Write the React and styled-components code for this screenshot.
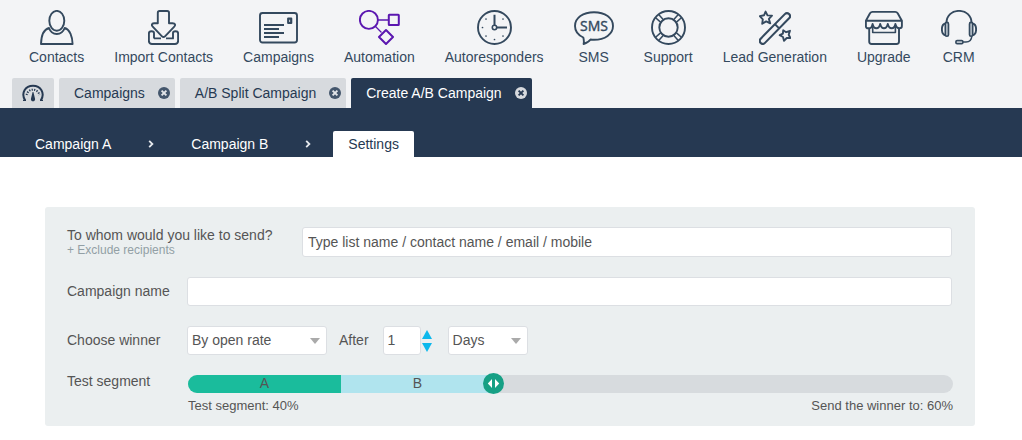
import React, { useState } from "react"
import styled, { createGlobalStyle } from "styled-components"

const GlobalStyle = createGlobalStyle`
  :root {
    --clr-header: #f3f4f6;
    --clr-tab: #d7dade;
    --clr-navy: #263952;
    --clr-slate: #34495e;
    --clr-purple: #5b17b0;
    --clr-panel: #ebeff0;
    --clr-border: #dcdfe3;
    --clr-green: #1abc9c;
    --clr-green-dark: #16a085;
    --clr-cyan: #b0e4ee;
    --clr-track: #d7dbde;
    --clr-blue: #0db8ec;
    --txt-form: #555;
    --txt-muted: #929fa5;
  }

  *,
  *::before,
  *::after {
    box-sizing: border-box;
  }

  body {
    margin: 0;
    background: #fff;
    color: var(--clr-slate);
    font: 14px/16px "Liberation Sans", Arial, sans-serif;
  }

  a {
    color: inherit;
    text-decoration: none;
  }

  input,
  select,
  button {
    font: inherit;
    color: inherit;
    margin: 0;
  }
`

const Header = styled.header`
  background: var(--clr-header);
  padding-top: 10px;
`

const MainNav = styled.nav`
  display: flex;
  gap: 30px;
  padding: 0 29px;
`

const NavItem = styled.a`
  display: flex;
  flex-direction: column;
  align-items: center;
  gap: 4px;
  white-space: nowrap;
`

const Icon = styled.svg`
  display: block;
  height: 35px;
  width: ${props => props.$w}px;
  fill: none;
  stroke: ${props => props.$color || "var(--clr-slate)"};
  stroke-width: 1.9;
  stroke-linejoin: round;
`

const IconText = styled.text`
  font-family: "Open Sans", sans-serif;
  font-size: 14px;
  fill: var(--clr-slate);
  stroke-width: 0.4;
`

const TabBar = styled.div`
  display: flex;
  gap: 5px;
  margin-top: 13px;
  padding: 0 12px;
`

const Tab = styled.div`
  display: flex;
  align-items: center;
  gap: 13px;
  height: 30px;
  padding: 0 5px 0 15px;
  border-radius: 2px 2px 0 0;
  white-space: nowrap;
  background: ${props => (props.$active ? "var(--clr-navy)" : "var(--clr-tab)")};
  color: ${props => (props.$active ? "#fff" : "var(--clr-navy)")};
`

const HomeTab = styled.a`
  display: flex;
  align-items: center;
  height: 30px;
  padding: 0 10px;
  border-radius: 2px 2px 0 0;
  background: var(--clr-tab);
`

const CloseButton = styled.button`
  display: block;
  width: 12px;
  height: 12px;
  padding: 0;
  border: 0;
  background: none;
  cursor: pointer;

  svg {
    display: block;
  }
`

const StepBar = styled.nav`
  display: flex;
  align-items: stretch;
  padding: 23px 20px 0;
  background: var(--clr-navy);
  color: #fff;
`

const Step = styled.a`
  padding: 5px 15px;
  border-radius: 2px 2px 0 0;
  ${props => props.$active && "background: #fff; color: var(--clr-navy);"}
`

const StepArrow = styled.span`
  display: flex;
  align-items: center;
  justify-content: center;
  width: 50px;
`

const Panel = styled.form`
  display: flex;
  flex-direction: column;
  gap: 20px;
  margin: 50px 47px 14px 45px;
  padding: 20px 23px 13px 22px;
  border-radius: 3px;
  background: var(--clr-panel);
  color: var(--txt-form);
`

const Row = styled.div`
  display: grid;
  grid-template-columns: ${props => (props.$wide ? "235px" : "120px")} 1fr;
  align-items: ${props => (props.$top ? "start" : "center")};
`

const Label = styled.label`
  display: block;
`

const FieldLabel = styled(Label)`
  padding-bottom: 2px;
`

const SegmentLabel = styled(Label)`
  line-height: 12px;
`

const Exclude = styled.a`
  display: block;
  font-size: 12px;
  line-height: 14px;
  color: var(--txt-muted);
`

const TextInput = styled.input`
  display: block;
  width: 100%;
  height: ${props => (props.$tall ? 30 : 29)}px;
  padding: 0 5px;
  border: 1px solid var(--clr-border);
  border-radius: 3px;
  background: #fff;

  &::placeholder {
    color: var(--txt-form);
    opacity: 1;
  }
`

const Inline = styled.div`
  display: flex;
  align-items: center;
`

const SelectBox = styled.div`
  position: relative;
  width: ${props => props.$w}px;

  select {
    display: block;
    appearance: none;
    width: 100%;
    height: 29px;
    padding: 0 24px 2px 4px;
    border: 1px solid var(--clr-border);
    border-radius: 3px;
    background: #fff;
  }

  svg {
    position: absolute;
    right: 7px;
    top: 12px;
    pointer-events: none;
  }
`

const AfterLabel = styled(FieldLabel)`
  margin: 0 14px 0 12px;
`

const NumberInput = styled(TextInput)`
  width: 38px;
  padding: 0 4px 2px;
`

const Spinner = styled.div`
  display: flex;
  flex-direction: column;
  gap: 4px;
  margin: 0 16px 0 1px;

  button {
    display: block;
    padding: 0;
    border: 0;
    background: none;
    cursor: pointer;
  }

  svg {
    display: block;
    fill: var(--clr-blue);
  }
`

const Slider = styled.div`
  position: relative;
  margin: 0 -1px 0 1px;
`

const Track = styled.div`
  display: flex;
  height: 18px;
  border-radius: 9px;
  overflow: hidden;
  background: var(--clr-track);
`

const Segment = styled.div`
  line-height: 16px;
  text-align: center;
  background: ${props => props.$color};
`

const Handle = styled.svg`
  position: absolute;
  top: -2px;
  margin-left: -11px;
  fill: var(--clr-green-dark);
  pointer-events: none;
`

const Range = styled.input`
  position: absolute;
  inset: 0;
  width: 100%;
  height: 18px;
  appearance: none;
  background: transparent;
  cursor: pointer;

  &::-webkit-slider-thumb {
    appearance: none;
    width: 20px;
    height: 20px;
    background: transparent;
  }
`

const Notes = styled.div`
  display: flex;
  justify-content: space-between;
  margin: 0 -1px 0 1px;
  padding-top: 5px;
  font-size: 13px;
  line-height: 15px;
`

const navItems = [
  {
    label: "Contacts",
    w: 34,
    art: (
      <>
        <ellipse cx="16.8" cy="10.8" rx="7.5" ry="9.9" />
        <path d="M9 18C3.5 19.5 1.2 27 1 34H32.6C32.4 27 30 19.5 24.7 18C23 22.5 20.5 24 16.8 24C13.2 24 10.6 22.5 9 18Z" />
      </>
    ),
  },
  {
    label: "Import Contacts",
    w: 31,
    art: (
      <>
        <path d="M11.5 1H19.2Q21 1 21 2.8V13.3H24.5C27.5 13.3 27.7 15.2 26.3 16.6L17 26.3Q15.5 27.8 14 26.3L4.7 16.6C3.3 15.2 3.5 13.3 6 13.3H9.8V2.8Q9.8 1 11.5 1Z" />
        <path d="M6 28.4V23Q6 21.3 3.5 21.3Q.9 21.3 .9 23.5V31Q.9 34 4 34H27Q30.1 34 30.1 31V23.5Q30.1 21.3 27.5 21.3Q25 21.3 25 23V28.4H18M6 28.4H13" />
      </>
    ),
  },
  {
    label: "Campaigns",
    w: 39,
    art: (
      <>
        <rect x="1" y="3" width="37" height="29.5" rx="2.5" />
        <rect x="29.2" y="8.6" width="3" height="4.4" strokeWidth="2.2" />
        <path d="M5 15H25M5 19H20M5 23H25M5 27H20" strokeWidth="2" />
      </>
    ),
  },
  {
    label: "Automation",
    w: 41,
    color: "var(--clr-purple)",
    art: (
      <>
        <circle cx="9.9" cy="9.9" r="9" />
        <path d="M19 10H30M16.3 16.3L22.5 22.5" strokeWidth="1.3" />
        <rect x="29.8" y="4.8" width="10" height="10.3" rx=".5" strokeWidth="2" />
        <path d="M27 20L34 27L27 34L20 27Z" strokeWidth="2" />
      </>
    ),
  },
  {
    label: "Autoresponders",
    w: 35,
    art: (
      <>
        <circle cx="17.5" cy="17.5" r="16.5" />
        <circle cx="17.5" cy="17.5" r="2.2" strokeWidth="1.6" />
        <path d="M17.5 15.3V4.8M19.7 17.5H30" strokeWidth="2" />
        <path
          d="M5.5 17.5h.01M17.5 29.5h.01M9 9h.01M26 9h.01M9 26h.01M26 26h.01"
          strokeWidth="1.7"
          strokeLinecap="round"
        />
      </>
    ),
  },
  {
    label: "SMS",
    w: 40,
    art: (
      <>
        <path d="M9.3 27.5C4 25 1 20.8 1 16C1 8 9 2.2 20 2.2S39 8 39 16S31 29.8 20 29.8Q18 29.8 16.5 29.5Q14.5 32.5 9.6 34Q10.3 31 9.3 27.5Z" />
        <IconText x="20" y="21" textAnchor="middle">
          SMS
        </IconText>
      </>
    ),
  },
  {
    label: "Support",
    w: 35,
    art: (
      <>
        <circle cx="17.5" cy="17.5" r="16.5" />
        <circle cx="17.5" cy="17.5" r="9.2" />
        <path
          d="M4.6 7.7L9.8 12.4M7.7 4.6L12.4 9.8M30.4 7.7L25.2 12.4M27.3 4.6L22.6 9.8M4.6 27.3L9.8 22.6M7.7 30.4L12.4 25.2M30.4 27.3L25.2 22.6M27.3 30.4L22.6 25.2"
          strokeWidth="1.5"
        />
      </>
    ),
  },
  {
    label: "Lead Generation",
    w: 32,
    art: (
      <>
        <g transform="rotate(-45.5 15.9 18.5)">
          <rect x="-4.3" y="15.5" width="40.4" height="6" rx="3" strokeWidth="2.1" />
          <path d="M19 15.6V21.4" />
        </g>
        <path d="M6.6 1.6L8.5 5.4L13 5.6L9.9 8.9L11.2 13.3L7.2 11.4L3.2 13.8L3.8 9.3L.8 6.2L5 5.3Z" />
        <path d="M24.2 20.3L27.1 22.2L31 20.8L29.7 24.7L31.4 28L27.7 28L25 30.8L24 27L20.7 25.2L23.9 23.6Z" />
      </>
    ),
  },
  {
    label: "Upgrade",
    w: 38,
    art: (
      <>
        <path d="M7.5 1.9H30.2Q31.8 1.9 32.7 3.3L36.9 10.7V16Q36.9 18.3 34.5 18.3Q31.3 18.3 30.4 14C29.5 19.7 24 19.7 22.8 14C21.5 19.7 16.5 19.7 15.2 14C14 19.7 8.700 19.7 7.6 14C6.700 18.3 5.500 18.3 3.3 18.3Q.9 18.3 .9 16V10.7L5 3.3Q5.9 1.9 7.5 1.9ZM.9 10.7H36.9" />
        <path d="M4.2 18.5V31.5Q4.2 34 6.7 34H31.5Q34 34 34 31.5V18.5" />
        <path d="M7.7 15V22.5H30.4V15" strokeWidth="1.6" />
      </>
    ),
  },
  {
    label: "CRM",
    w: 36,
    art: (
      <>
        <path d="M5.4 13C5.6 5.5 10.8 .9 18 .9S30.400 5.5 30.600 13" />
        <g fill="#b8c2cb" strokeWidth="1.600">
          <rect x="4.3" y="12.4" width="3.2" height="13.8" rx="1.5" />
          <rect x="28.5" y="12.4" width="3.2" height="13.8" rx="1.5" />
          <rect x="14.9" y="30.5" width="7" height="3.3" rx="1.2" />
        </g>
        <path d="M4.3 13.5C2 14 .9 16.5 .9 19.3S2 24.7 4.3 25.2M31.7 13.5C34 14 35.1 16.5 35.1 19.3S34 24.7 31.7 25.2" />
        <path d="M30.8 26.2C30.5 30.5 28.5 32 25 32H22" strokeWidth="1.5" />
      </>
    ),
  },
]

const tabs = [
  { label: "Campaigns" },
  { label: "A/B Split Campaign" },
  { label: "Create A/B Campaign", active: true },
]

function Gauge() {
  return (
    <svg width="22" height="18" viewBox="0 0 22 18" fill="none" stroke="#263952">
      <path d="M3.2 16.5C-1.500 9 3.5 1.8 11 1.8S23.5 9 18.8 16.5" strokeWidth="2" />
      <path d="M1 16.4H4M18 16.4H21" strokeWidth="1.4" />
      <path
        d="M4.6 11A6.5 6.5 0 0 1 17.4 11"
        strokeWidth="2"
        strokeDasharray="1.2 1.3"
      />
      <path d="M10.6 8L9 14.5A2.1 2.1 0 1 0 13 14.5L11.4 8Z" fill="#263952" stroke="none" />
    </svg>
  )
}

function CloseIcon({ active }) {
  return (
    <svg width="12" height="12" viewBox="0 0 12 12">
      <circle cx="6" cy="6" r="6" fill={active ? "#d7dade" : "#44566c"} />
      <path
        d="M3.6 3.6L8.4 8.4M8.4 3.6L3.6 8.4"
        stroke={active ? "#263952" : "#e4e6e9"}
        strokeWidth="1.9"
      />
    </svg>
  )
}

function Chevron() {
  return (
    <StepArrow>
      <svg width="6" height="8" viewBox="0 0 6 8" fill="none" stroke="#e6e9ed" strokeWidth="1.8">
        <path d="M1.2 .8L4.4 4L1.2 7.2" />
      </svg>
    </StepArrow>
  )
}

function Select({ width, label, id, options }) {
  return (
    <SelectBox $w={width}>
      <select id={id} aria-label={label}>
        {options.map(option => (
          <option key={option}>{option}</option>
        ))}
      </select>
      <svg width="10" height="6" viewBox="0 0 10 6" fill="#aaa">
        <path d="M0 0H10L5 6Z" />
      </svg>
    </SelectBox>
  )
}

export default function App() {
  const [days, setDays] = useState(1)
  const [segment, setSegment] = useState(40)

  return (
    <>
      <GlobalStyle />
      <Header>
        <MainNav>
          {navItems.map(item => (
            <NavItem href="#" key={item.label}>
              <Icon $w={item.w} $color={item.color} viewBox={`0 0 ${item.w} 35`} aria-hidden="true">
                {item.art}
              </Icon>
              {item.label}
            </NavItem>
          ))}
        </MainNav>
        <TabBar>
          <HomeTab href="#" aria-label="Dashboard">
            <Gauge />
          </HomeTab>
          {tabs.map(tab => (
            <Tab key={tab.label} $active={tab.active}>
              <a href="#">{tab.label}</a>
              <CloseButton type="button" aria-label={`Close ${tab.label}`}>
                <CloseIcon active={tab.active} />
              </CloseButton>
            </Tab>
          ))}
        </TabBar>
      </Header>
      <StepBar>
        <Step href="#">Campaign A</Step>
        <Chevron />
        <Step href="#">Campaign B</Step>
        <Chevron />
        <Step href="#" $active>
          Settings
        </Step>
      </StepBar>
      <Panel>
        <Row $wide>
          <div>
            <Label htmlFor="recipients">To whom would you like to send?</Label>
            <Exclude href="#">+ Exclude recipients</Exclude>
          </div>
          <TextInput
            $tall
            id="recipients"
            type="text"
            placeholder="Type list name / contact name / email / mobile"
          />
        </Row>
        <Row>
          <FieldLabel htmlFor="name">Campaign name</FieldLabel>
          <TextInput id="name" type="text" />
        </Row>
        <Row>
          <FieldLabel htmlFor="winner">Choose winner</FieldLabel>
          <Inline>
            <Select width={140} id="winner" options={["By open rate", "By click rate"]} />
            <AfterLabel htmlFor="after">After</AfterLabel>
            <NumberInput
              id="after"
              type="text"
              inputMode="numeric"
              value={days}
              onChange={e => setDays(Number(e.target.value) || 0)}
            />
            <Spinner>
              <button type="button" aria-label="Increase" onClick={() => setDays(days + 1)}>
                <svg width="10" height="9" viewBox="0 0 10 9">
                  <path d="M5 0L10 9H0Z" />
                </svg>
              </button>
              <button
                type="button"
                aria-label="Decrease"
                onClick={() => setDays(Math.max(1, days - 1))}
              >
                <svg width="10" height="9" viewBox="0 0 10 9">
                  <path d="M0 0H10L5 9Z" />
                </svg>
              </button>
            </Spinner>
            <Select width={80} label="Unit" id="unit" options={["Days", "Hours"]} />
          </Inline>
        </Row>
        <Row $top>
          <SegmentLabel htmlFor="segment">Test segment</SegmentLabel>
          <div>
            <Slider>
              <Track>
                <Segment $color="var(--clr-green)" style={{ width: `${segment / 2}%` }}>
                  A
                </Segment>
                <Segment $color="var(--clr-cyan)" style={{ width: `${segment / 2}%` }}>
                  B
                </Segment>
              </Track>
              <Handle
                width="21"
                height="21"
                viewBox="0 0 21 21"
                style={{ left: `${segment}%` }}
                aria-hidden="true"
              >
                <circle cx="10.5" cy="10.5" r="10.5" />
                <path d="M9 6V15L4.8 10.5ZM12 6V15L16.2 10.5Z" fill="#fff" />
              </Handle>
              <Range
                id="segment"
                type="range"
                min="0"
                max="100"
                value={segment}
                onChange={e => setSegment(Number(e.target.value))}
              />
            </Slider>
            <Notes>
              <span>Test segment: {segment}%</span>
              <span>Send the winner to: {100 - segment}%</span>
            </Notes>
          </div>
        </Row>
      </Panel>
    </>
  )
}
